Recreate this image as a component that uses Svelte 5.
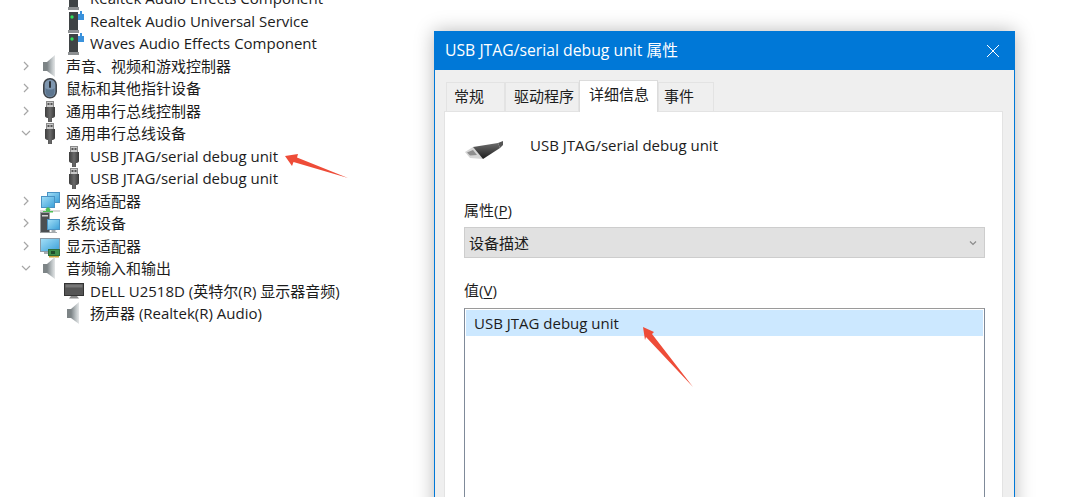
<script>
	const devices = [
		{ label: 'Realtek Audio Effects Component', icon: 'soft', depth: 1 },
		{ label: 'Realtek Audio Universal Service', icon: 'soft', depth: 1 },
		{ label: 'Waves Audio Effects Component', icon: 'soft', depth: 1 },
		{ label: '声音、视频和游戏控制器', icon: 'speaker', depth: 0, state: 'closed' },
		{ label: '鼠标和其他指针设备', icon: 'mouse', depth: 0, state: 'closed' },
		{ label: '通用串行总线控制器', icon: 'usb', depth: 0, state: 'closed' },
		{ label: '通用串行总线设备', icon: 'usb', depth: 0, state: 'open' },
		{ label: 'USB JTAG/serial debug unit', icon: 'usb', depth: 1 },
		{ label: 'USB JTAG/serial debug unit', icon: 'usb', depth: 1 },
		{ label: '网络适配器', icon: 'network', depth: 0, state: 'closed' },
		{ label: '系统设备', icon: 'system', depth: 0, state: 'closed' },
		{ label: '显示适配器', icon: 'display', depth: 0, state: 'closed' },
		{ label: '音频输入和输出', icon: 'speaker', depth: 0, state: 'open' },
		{ label: 'DELL U2518D (英特尔(R) 显示器音频)', icon: 'monitor', depth: 1 },
		{ label: '扬声器 (Realtek(R) Audio)', icon: 'speaker', depth: 1 }
	];

	const tabs = [
		{ label: '常规', width: 59, pad: 7 },
		{ label: '驱动程序', width: 74, pad: 8 },
		{ label: '详细信息', width: 79, pad: 9, active: true },
		{ label: '事件', width: 56, pad: 5 }
	];
</script>

<svg class="defs" width="0" height="0" aria-hidden="true">
	<defs>
		<linearGradient id="cone" x1="0" x2="1" y1="0" y2="0">
			<stop offset="0" stop-color="#7b8285" />
			<stop offset="0.6" stop-color="#bcc2c4" />
			<stop offset="1" stop-color="#e4e6e7" />
		</linearGradient>
		<linearGradient id="plug" x1="0" x2="1" y1="0" y2="0">
			<stop offset="0" stop-color="#3e3e3e" />
			<stop offset="0.5" stop-color="#6a6a6a" />
			<stop offset="1" stop-color="#3a3a3a" />
		</linearGradient>
		<linearGradient id="screen" x1="0" x2="1" y1="0" y2="1">
			<stop offset="0" stop-color="#a4e0f8" />
			<stop offset="1" stop-color="#3a9fd8" />
		</linearGradient>
		<linearGradient id="bigplug" x1="0" x2="0" y1="0" y2="1">
			<stop offset="0" stop-color="#6c6c6c" />
			<stop offset="1" stop-color="#1d1d1d" />
		</linearGradient>

		<symbol id="i-speaker" viewBox="0 0 20 24">
			<rect x="3" y="8" width="4" height="9" fill="#7d8486" />
			<path d="M7 8 15 1V23L7 17Z" fill="url(#cone)" />
		</symbol>
		<symbol id="i-mouse" viewBox="0 0 20 24">
			<rect x="3.800" y="2.800" width="12.400" height="19" rx="6" fill="#7f97b0" stroke="#3f444a" stroke-width="1.600" />
			<path d="M5.500 12c2 2 7 2 9 0v4c0 3-2 4.500-4.500 4.500S5.500 19 5.500 16Z" fill="#5d7690" />
			<rect x="9" y="5" width="2" height="7" rx="1" fill="#2d3238" />
		</symbol>
		<symbol id="i-usb" viewBox="0 0 20 24">
			<rect x="6.500" y="2.500" width="7" height="6" fill="#c9c9c9" stroke="#8a8a8a" />
			<rect x="7.500" y="4" width="2" height="2" fill="#555" />
			<rect x="10.500" y="4" width="2" height="2" fill="#555" />
			<path d="M5 8H15V17C15 18.500 13 19 12 19V23H8V19C7 19 5 18.500 5 17Z" fill="url(#plug)" />
		</symbol>
		<symbol id="i-soft" viewBox="0 0 20 24">
			<path d="M5 3H14V22H5Z" fill="#3f4345" />
			<path d="M4 21H15V24H4Z" fill="#8d9092" />
			<circle cx="8" cy="8" r="1.700" fill="#2fe05a" />
			<path d="M14 5H16V2H18V5H20V11H14Z" fill="#3a92dc" />
		</symbol>
		<symbol id="i-network" viewBox="0 0 20 24">
			<rect x="7.500" y="3.500" width="12" height="10" fill="url(#screen)" stroke="#4a93c4" />
			<rect x="1.500" y="7.500" width="13" height="11" fill="url(#screen)" stroke="#4a93c4" />
			<path d="M0 21H20V23H0Z" fill="#d9d9d9" />
			<path d="M8 18 11 20.500H10V22H13V23.500H3V22H6V20.500H5Z" fill="#4fbf55" />
		</symbol>
		<symbol id="i-system" viewBox="0 0 20 24">
			<rect x="0.500" y="1.500" width="9" height="20" fill="#4c4f52" stroke="#9a9ea0" />
			<rect x="2" y="4" width="6" height="1.500" fill="#d0d0d0" />
			<rect x="7.500" y="8.500" width="12" height="10" fill="url(#screen)" stroke="#4a93c4" />
			<path d="M11.500 19H15.500V21H17V22H10V21H11.500Z" fill="#a5abae" />
		</symbol>
		<symbol id="i-display" viewBox="0 0 20 24">
			<rect x="0.500" y="4.500" width="19" height="13" fill="url(#screen)" stroke="#8a9aa6" />
			<path d="M4 18H10V20H4Z" fill="#a6acb0" />
			<rect x="8.500" y="15.500" width="11" height="6" fill="#3f8f4c" stroke="#2e6e39" />
			<path d="M9 22H19V23.500H9Z" fill="#c6a23a" />
			<rect x="11" y="17" width="4" height="3" fill="#1f4d2a" />
		</symbol>
		<symbol id="i-monitor" viewBox="0 0 20 24">
			<rect x="0.500" y="4.500" width="19" height="12" fill="#555" stroke="#333" />
			<rect x="1.500" y="5.500" width="17" height="3" fill="#777" />
			<path d="M7 17H13L15 19.500H5Z" fill="#8a8a8a" />
		</symbol>
	</defs>
</svg>

<div class="page">
	<ul class="tree">
		{#each devices as d}
			<li class="row" class:child={d.depth === 1}>
				{#if d.depth === 0}
					<svg class="chev" viewBox="0 0 16 16" aria-hidden="true">
						{#if d.state === 'open'}
							<path d="M4 6 8 10 12 6" />
						{:else}
							<path d="M6 4 10 8 6 12" />
						{/if}
					</svg>
				{/if}
				<svg class="icon" viewBox="0 0 20 24" aria-hidden="true"><use href="#i-{d.icon}" /></svg>
				<span>{d.label}</span>
			</li>
		{/each}
	</ul>

	<section class="dialog">
		<header class="title">
			<span>USB JTAG/serial debug unit 属性</span>
			<svg class="close" viewBox="0 0 14 14" aria-hidden="true"><path d="M1 1 13 13M13 1 1 13" /></svg>
		</header>
		<div class="body">
			<div class="tabs">
				{#each tabs as t}
					<div class="tab" class:active={t.active} style="width: {t.width}px; padding-left: {t.pad}px">{t.label}</div>
				{/each}
			</div>
			<div class="panel">
				<div class="device">
					<svg class="bigusb" viewBox="0 0 40 22" aria-hidden="true">
						<path d="M0 13 8 8 18 20 5 19Z" fill="#d6d6d6" />
						<path d="M2 13.500 8 11 12 16 5 16.500Z" fill="#8f8f8f" />
						<path d="M8 8 33 4 35 9 18 20Z" fill="url(#bigplug)" />
						<path d="M33 4 38 2 38 6 35 9Z" fill="#555" />
					</svg>
					<span>USB JTAG/serial debug unit</span>
				</div>
				<div class="label">属性(<u>P</u>)</div>
				<div class="select">
					<span>设备描述</span>
					<svg viewBox="0 0 10 10" aria-hidden="true"><path d="M2 3.500 5 6.500 8 3.500" /></svg>
				</div>
				<div class="label value">值(<u>V</u>)</div>
				<div class="list">
					<div class="item">USB JTAG debug unit</div>
				</div>
			</div>
		</div>
	</section>

	<svg class="arrows" viewBox="0 0 1081 497" aria-hidden="true">
		<path d="M285 156 298 154 297 157.500 348 178 293.500 162 292 166Z" />
		<path d="M643 327 654 332 652 334 693 387 646 337 645 340Z" />
	</svg>
</div>

<style>
	:global(body) {
		margin: 0;
		background: #fff;
	}

	.defs {
		position: absolute;
	}

	.page {
		position: relative;
		display: flex;
		width: 1081px;
		height: 497px;
		overflow: hidden;
		background: #fff;
		color: #1c1c1c;
		font: 15px/1.2 "Open Sans", "Noto Sans CJK SC", sans-serif;
	}

	.tree {
		flex: 0 0 434px;
		margin: -13px 0 0;
		padding: 0;
		list-style: none;
	}

	.row {
		display: flex;
		align-items: center;
		height: 22.500px;
		padding-left: 18px;
		white-space: nowrap;
	}

	.row.child {
		padding-left: 64px;
	}

	.chev {
		flex: none;
		width: 16px;
		height: 16px;
		margin-right: 6px;
		fill: none;
		stroke: #a6a6a6;
		stroke-width: 1.200;
	}

	.icon {
		flex: none;
		width: 20px;
		height: 24px;
		margin-right: 6px;
	}

	.dialog {
		flex: 0 0 581px;
		box-sizing: border-box;
		height: 520px;
		margin-top: 31px;
		border: 1px solid #0078d7;
		border-top: 0;
		background: #efefef;
		box-shadow: 0 0 18px rgb(0 0 0 / 28%);
	}

	.title {
		display: flex;
		align-items: center;
		justify-content: space-between;
		height: 39px;
		margin: 0 -1px;
		padding: 0 15px 0 11px;
		background: #0078d7;
		color: #fff;
		font-size: 15.750px;
	}

	.close {
		width: 14px;
		height: 14px;
		fill: none;
		stroke: #fff;
		stroke-width: 1;
	}

	.body {
		padding: 12px 11px 0 9px;
	}

	.tabs {
		display: flex;
		height: 29px;
		padding-left: 2px;
	}

	.tab {
		box-sizing: border-box;
		height: 29px;
		padding-top: 4px;
		border: 1px solid #e3e3e3;
		border-bottom: 0;
		background: #efefef;
	}

	.tab.active {
		position: relative;
		z-index: 1;
		height: 32px;
		margin-top: -2px;
		padding-top: 4px;
		border-color: #dcdcdc;
		background: #fff;
	}

	.panel {
		height: 400px;
		padding: 0 17px 0 19px;
		border: 1px solid #e3e3e3;
		background: #fff;
	}

	.device {
		display: flex;
		align-items: flex-start;
		gap: 25px;
		padding-top: 24px;
		height: 33px;
	}

	.bigusb {
		flex: none;
		width: 40px;
		height: 22px;
		margin: 3px 0 0 1px;
	}

	.label {
		margin-top: 32px;
		height: 19px;
	}

	.label.value {
		margin-top: 23px;
		margin-bottom: -1px;
	}

	.label u {
		text-underline-offset: 2px;
	}

	.select {
		display: flex;
		align-items: center;
		justify-content: space-between;
		box-sizing: border-box;
		height: 31px;
		margin-top: 7px;
		padding: 0 6px 0 4px;
		border: 1px solid #cdcdcd;
		background: #e1e1e1;
	}

	.select svg {
		width: 10px;
		height: 10px;
		fill: none;
		stroke: #8a8a8a;
		stroke-width: 1.200;
	}

	.list {
		box-sizing: border-box;
		height: 200px;
		margin-top: 9px;
		padding: 1px;
		border: 1px solid #7f8a99;
		border-top-color: #9a9a9a;
	}

	.item {
		height: 26px;
		padding-left: 8px;
		line-height: 26px;
		background: #cce8ff;
	}

	.arrows {
		position: absolute;
		inset: 0;
		width: 1081px;
		height: 497px;
		fill: #ee4c38;
		pointer-events: none;
	}
</style>
